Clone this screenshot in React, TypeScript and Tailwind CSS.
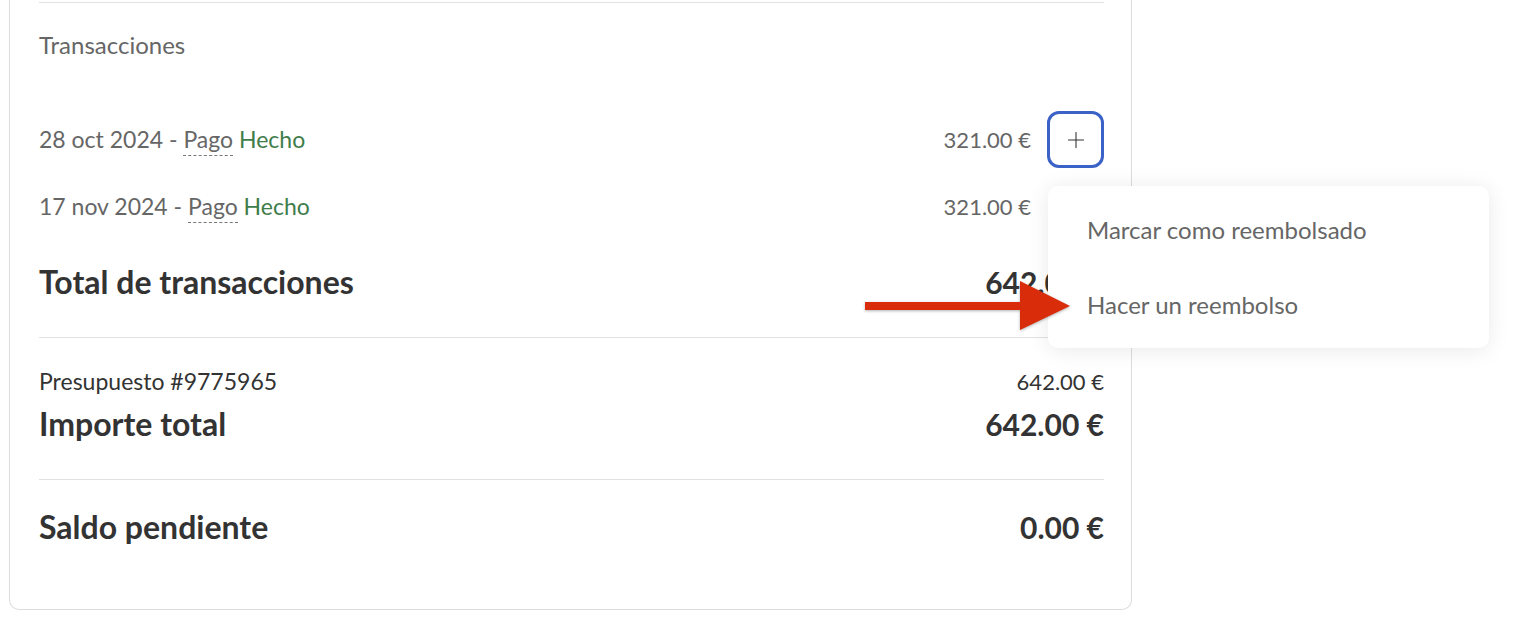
import { Plus } from 'lucide-react'

const font = { fontFamily: 'Lato, "Noto Sans", sans-serif' }

function TxRow({ date, amount, active }: { date: string; amount: string; active?: boolean }) {
  return (
    <div className={`flex items-center justify-between ${active ? 'h-[57px]' : 'h-[40px]'}`}>
      <div className="text-[23px] text-[#666] whitespace-nowrap">
        {date} -{' '}
        <span className="border-b border-dashed border-[#777] pb-[2px]">Pago</span>{' '}
        <span className="text-[#3f7d4b]">Hecho</span>
      </div>
      <div className="flex items-center">
        <span className="text-[22px] text-[#666]">{amount}</span>
        <div className="w-[57px] ml-[16px] flex justify-center">
          {active && (
            <button className="w-[57px] h-[57px] rounded-[12px] border-[3px] border-[#3a62c7] bg-white flex items-center justify-center text-[#333]">
              <Plus size={26} strokeWidth={1} />
            </button>
          )}
        </div>
      </div>
    </div>
  )
}

function TotalRow({ label, amount, className }: { label: string; amount: string; className: string }) {
  return (
    <div className={`h-[40px] flex items-center justify-between font-bold text-[#333] ${className}`}>
      <span className="text-[32px]">{label}</span>
      <span className="text-[30px]">{amount}</span>
    </div>
  )
}

export default function App() {
  return (
    <div className="relative w-[1536px] h-[620px] bg-white overflow-hidden" style={font}>
      <div className="ml-[9px] w-[1123px] h-[610px] border-x border-b border-[#dcdcdc] rounded-b-[10px] pl-[29px] pr-[27px] pt-[2px]">
        <div className="border-t border-[#e2e2e2]" />

        <div className="mt-[27px] h-[30px] flex items-center text-[24px] text-[#666]">Transacciones</div>

        <div className="mt-[51px]">
          <TxRow date="28 oct 2024" amount="321.00 €" active />
        </div>
        <div className="mt-[18px]">
          <TxRow date="17 nov 2024" amount="321.00 €" />
        </div>

        <TotalRow className="mt-[36px]" label="Total de transacciones" amount="642.00 €" />

        <div className="mt-[35px] border-t border-[#e2e2e2]" />

        <div className="mt-[28px] h-[30px] flex items-center justify-between text-[23px] text-[#333]">
          <span>Presupuesto #9775965</span>
          <span className="text-[22px]">642.00 €</span>
        </div>
        <TotalRow className="mt-[8px]" label="Importe total" amount="642.00 €" />

        <div className="mt-[35px] border-t border-[#e2e2e2]" />

        <TotalRow className="mt-[27px]" label="Saldo pendiente" amount="0.00 €" />
      </div>

      {/* dropdown menu */}
      <div className="absolute left-[1048px] top-[186px] w-[441px] h-[162px] bg-white rounded-[10px] shadow-[0_2px_22px_rgba(0,0,0,0.09)] py-[6px] text-[24px] text-[#666]">
        <div className="h-[75px] flex items-center pl-[39px]">Marcar como reembolsado</div>
        <div className="h-[75px] flex items-center pl-[39px]">Hacer un reembolso</div>
      </div>

      {/* annotation arrow */}
      <svg
        className="absolute left-[860px] top-[274px]"
        width="216"
        height="62"
        viewBox="0 0 216 62"
        style={{ filter: 'drop-shadow(0 1px 1.5px rgba(0,0,0,0.3))' }}
      >
        <rect x="5" y="28" width="158" height="8" fill="#d92c0a" />
        <polygon points="160,7 160,56 210,32" fill="#d92c0a" />
      </svg>
    </div>
  )
}
